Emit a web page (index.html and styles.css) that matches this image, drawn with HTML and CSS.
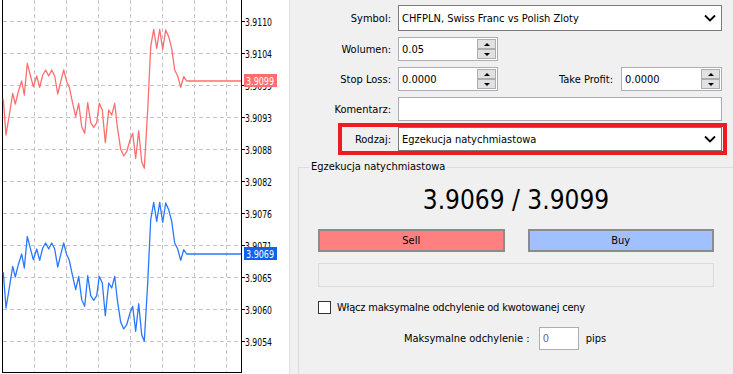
FILE: index.html
```html
<!DOCTYPE html>
<html lang="pl">
<head>
<meta charset="utf-8">
<title>Zlecenie</title>
<link rel="stylesheet" href="styles.css">
</head>
<body>
<div class="app">
  <div class="chart">
    <svg width="289" height="374" viewBox="0 0 289 374" xmlns="http://www.w3.org/2000/svg">
      <g class="grid" stroke="#c4c4c4" stroke-width="1" stroke-dasharray="4 3" fill="none">
        <line x1="34.5" y1="0" x2="34.5" y2="372"/>
        <line x1="66.5" y1="0" x2="66.5" y2="372"/>
        <line x1="98.5" y1="0" x2="98.5" y2="372"/>
        <line x1="130.5" y1="0" x2="130.5" y2="372"/>
        <line x1="162.5" y1="0" x2="162.5" y2="372"/>
        <line x1="194.5" y1="0" x2="194.5" y2="372"/>
        <line x1="226.5" y1="0" x2="226.5" y2="372"/>
        <line x1="3" y1="21.5" x2="241" y2="21.5"/>
        <line x1="3" y1="53.5" x2="241" y2="53.5"/>
        <line x1="3" y1="85.5" x2="241" y2="85.5"/>
        <line x1="3" y1="117.5" x2="241" y2="117.5"/>
        <line x1="3" y1="149.5" x2="241" y2="149.5"/>
        <line x1="3" y1="181.5" x2="241" y2="181.5"/>
        <line x1="3" y1="213.5" x2="241" y2="213.5"/>
        <line x1="3" y1="245.5" x2="241" y2="245.5"/>
        <line x1="3" y1="277.5" x2="241" y2="277.5"/>
        <line x1="3" y1="309.5" x2="241" y2="309.5"/>
        <line x1="3" y1="341.5" x2="241" y2="341.5"/>
      </g>
      <g stroke="#000" stroke-width="1">
        <line x1="2.5" y1="0" x2="2.5" y2="373"/>
        <line x1="2" y1="372.5" x2="242" y2="372.5"/>
        <line x1="241.5" y1="0" x2="241.5" y2="373"/>
        <line x1="241" y1="21.5" x2="245" y2="21.5"/>
        <line x1="241" y1="53.5" x2="245" y2="53.5"/>
        <line x1="241" y1="85.5" x2="245" y2="85.5"/>
        <line x1="241" y1="117.5" x2="245" y2="117.5"/>
        <line x1="241" y1="149.5" x2="245" y2="149.5"/>
        <line x1="241" y1="181.5" x2="245" y2="181.5"/>
        <line x1="241" y1="213.5" x2="245" y2="213.5"/>
        <line x1="241" y1="245.5" x2="245" y2="245.5"/>
        <line x1="241" y1="277.5" x2="245" y2="277.5"/>
        <line x1="241" y1="309.5" x2="245" y2="309.5"/>
        <line x1="241" y1="341.5" x2="245" y2="341.5"/>
      </g>
      <g class="axis-label">
        <text x="245" y="25.5" textLength="27" lengthAdjust="spacingAndGlyphs">3.9110</text>
        <text x="245" y="57.5" textLength="27" lengthAdjust="spacingAndGlyphs">3.9104</text>
        <text x="245" y="89.5" textLength="27" lengthAdjust="spacingAndGlyphs">3.9099</text>
        <text x="245" y="121.5" textLength="27" lengthAdjust="spacingAndGlyphs">3.9093</text>
        <text x="245" y="153.5" textLength="27" lengthAdjust="spacingAndGlyphs">3.9088</text>
        <text x="245" y="185.5" textLength="27" lengthAdjust="spacingAndGlyphs">3.9082</text>
        <text x="245" y="217.5" textLength="27" lengthAdjust="spacingAndGlyphs">3.9076</text>
        <text x="245" y="249.5" textLength="27" lengthAdjust="spacingAndGlyphs">3.9071</text>
        <text x="245" y="281.5" textLength="27" lengthAdjust="spacingAndGlyphs">3.9065</text>
        <text x="245" y="313.5" textLength="27" lengthAdjust="spacingAndGlyphs">3.9060</text>
        <text x="245" y="345.5" textLength="27" lengthAdjust="spacingAndGlyphs">3.9054</text>
      </g>
      <polyline class="ask-line" fill="none" stroke="#ff6e6e" stroke-width="1.3" stroke-linejoin="round"
        points="3.3,99.3 6,135 9.3,115 12.7,93.3 15.3,104 18.3,91.7 21.7,81 24.3,95 27.3,63.3 30.7,76.7 33.3,86.7 36.7,76 39.7,87.3 42.7,75 45.7,70 48.7,76 51.7,70 54.7,76 57.7,94 60.7,81.7 63.7,70 66.7,81.7 69.3,87.3 72.7,103.3 75.7,116.7 78.7,103.3 81.7,126.7 84.7,133.3 87.7,102.7 90.7,122.7 93.7,127.3 96.7,122.7 99.3,103.3 102.3,110 105.3,142.7 108.7,110 111.7,115 114.7,103.3 117.3,126.7 120.7,149.3 123.7,156 126.7,151.7 130,140 132.7,133.3 135.7,158.3 138.7,130.7 141.7,161.7 144.3,168.3 147.7,110 150.7,46.7 153.7,29.3 156.7,48.3 159.7,29.3 162.7,49.3 165.7,30 168.7,36.7 171.7,48.3 174.7,70 177.7,76 180.7,87.3 183.7,76.7 186.7,81 241,81"/>
      <polyline class="bid-line" transform="translate(0,173)" fill="none" stroke="#2a78ff" stroke-width="1.3" stroke-linejoin="round"
        points="3.3,99.3 6,135 9.3,115 12.7,93.3 15.3,104 18.3,91.7 21.7,81 24.3,95 27.3,63.3 30.7,76.7 33.3,86.7 36.7,76 39.7,87.3 42.7,75 45.7,70 48.7,76 51.7,70 54.7,76 57.7,94 60.7,81.7 63.7,70 66.7,81.7 69.3,87.3 72.7,103.3 75.7,116.7 78.7,103.3 81.7,126.7 84.7,133.3 87.7,102.7 90.7,122.7 93.7,127.3 96.7,122.7 99.3,103.3 102.3,110 105.3,142.7 108.7,110 111.7,115 114.7,103.3 117.3,126.7 120.7,149.3 123.7,156 126.7,151.7 130,140 132.7,133.3 135.7,158.3 138.7,130.7 141.7,161.7 144.3,168.3 147.7,110 150.7,46.7 153.7,29.3 156.7,48.3 159.7,29.3 162.7,49.3 165.7,30 168.7,36.7 171.7,48.3 174.7,70 177.7,76 180.7,87.3 183.7,76.7 186.7,81 241,81"/>
      <rect x="244" y="74" width="33" height="13" fill="#ff6e6e"/>
      <text class="badge-text" x="246" y="84.5" textLength="28" lengthAdjust="spacingAndGlyphs">3.9099</text>
      <rect x="244" y="247" width="33" height="13" fill="#0f62ea"/>
      <text class="badge-text" x="246" y="257.5" textLength="28" lengthAdjust="spacingAndGlyphs">3.9069</text>
    </svg>
  </div>

  <div class="panel">
    <div class="form">
      <div class="row row-tall">
        <span class="lbl">Symbol:</span>
        <div class="select">
          <span>CHFPLN, Swiss Franc vs Polish Zloty</span>
          <svg class="chev" width="12" height="8" viewBox="0 0 12 8"><path d="M1 1.5 L6 6.5 L11 1.5" fill="none" stroke="#000" stroke-width="1.8"/></svg>
        </div>
      </div>
      <div class="row">
        <span class="lbl">Wolumen:</span>
        <div class="num">
          <span>0.05</span>
          <div class="spin"><i class="up"></i><i class="down"></i></div>
        </div>
      </div>
      <div class="row">
        <span class="lbl">Stop Loss:</span>
        <div class="num">
          <span>0.0000</span>
          <div class="spin"><i class="up"></i><i class="down"></i></div>
        </div>
        <span class="lbl2">Take Profit:</span>
        <div class="num wide">
          <span>0.0000</span>
          <div class="spin"><i class="up"></i><i class="down"></i></div>
        </div>
      </div>
      <div class="row">
        <span class="lbl">Komentarz:</span>
        <div class="text"></div>
      </div>
      <div class="row highlight">
        <span class="lbl">Rodzaj:</span>
        <div class="select">
          <span>Egzekucja natychmiastowa</span>
          <svg class="chev" width="12" height="8" viewBox="0 0 12 8"><path d="M1 1.5 L6 6.5 L11 1.5" fill="none" stroke="#000" stroke-width="1.8"/></svg>
        </div>
      </div>
    </div>

    <fieldset class="group">
      <legend>Egzekucja natychmiastowa</legend>
      <div class="price">3.9069 / 3.9099</div>
      <div class="buttons">
        <div class="btn sell">Sell</div>
        <div class="btn buy">Buy</div>
      </div>
      <div class="status"></div>
      <div class="check-row">
        <span class="checkbox"></span>
        <span class="check-label">Włącz maksymalne odchylenie od kwotowanej ceny</span>
      </div>
      <div class="dev-row">
        <span>Maksymalne odchylenie :</span>
        <div class="small-input">0</div>
        <span>pips</span>
      </div>
    </fieldset>
  </div>
</div>
</body>
</html>
```

FILE: styles.css
```css
html, body {
  margin: 0;
  padding: 0;
}

body {
  font-family: "DejaVu Sans Condensed", "DejaVu Sans", "Liberation Sans", sans-serif;
  font-stretch: condensed;
  font-size: 11px;
  color: #000;
  background: #f0f0f0;
}

.app {
  display: flex;
  width: 733px;
  height: 374px;
  overflow: hidden;
}

.chart {
  flex: none;
  width: 289px;
  height: 374px;
  background: #fff;
}

.chart svg {
  display: block;
}

.axis-label text {
  font-family: "DejaVu Sans Condensed", "DejaVu Sans", sans-serif;
  font-stretch: condensed;
  font-size: 10px;
  fill: #000;
}

.badge-text {
  font-family: "DejaVu Sans Condensed", "DejaVu Sans", sans-serif;
  font-stretch: condensed;
  font-size: 10px;
  fill: #fff;
}

.panel {
  flex: 1;
  min-width: 0;
  border-left: 1px solid #e2e2e2;
  background: #f0f0f0;
  overflow: hidden;
}

.form {
  display: flex;
  flex-direction: column;
  gap: 6px;
  padding: 5px 11px 0 0;
}

.row {
  position: relative;
  display: flex;
  align-items: center;
  height: 24px;
}

.row-tall {
  height: 26px;
}

.lbl {
  flex: none;
  width: 101px;
  margin-right: 7px;
  text-align: right;
}

.lbl2 {
  flex: 1;
  margin-right: 8px;
  text-align: right;
}

.select {
  flex: 1;
  height: 100%;
  box-sizing: border-box;
  display: flex;
  align-items: center;
  justify-content: space-between;
  padding: 0 5px 0 3px;
  border: 1px solid #7a7a7a;
  background: #fff;
}

.chev {
  display: block;
}

.num {
  flex: none;
  width: 100px;
  height: 100%;
  box-sizing: border-box;
  display: flex;
  align-items: center;
  padding-left: 3px;
  border: 1px solid #abadb3;
  background: #fff;
}

.num.wide {
  width: 101px;
}

.spin {
  align-self: flex-start;
  margin: 1px 1px 0 auto;
  width: 19px;
  display: flex;
  flex-direction: column;
}

.spin i {
  display: flex;
  align-items: center;
  justify-content: center;
  height: 10px;
  box-sizing: border-box;
  border: 1px solid #adadad;
  background: #e1e1e1;
}

.spin i::before {
  content: "";
  width: 0;
  height: 0;
  border-left: 3px solid transparent;
  border-right: 3px solid transparent;
}

.spin .up::before {
  border-bottom: 3px solid #000;
}

.spin .down::before {
  border-top: 3px solid #000;
}

.text {
  flex: 1;
  height: 100%;
  box-sizing: border-box;
  border: 1px solid #abadb3;
  background: #fff;
}

.highlight::after {
  content: "";
  position: absolute;
  left: 48px;
  right: -5px;
  top: -4px;
  bottom: -4px;
  border: 4px solid #ed1c24;
  pointer-events: none;
}

.group {
  margin: 9px -1px 0 8px;
  padding: 0 19px;
  min-width: 0;
  height: 230px;
  border: 1px solid #dcdcdc;
}

.group legend {
  margin-left: -9px;
  padding: 0 2px;
  line-height: 14px;
}

.price {
  margin-top: 11px;
  font-size: 26px;
  line-height: 30px;
  text-align: center;
}

.buttons {
  display: grid;
  grid-template-columns: 1fr 1fr;
  gap: 23px;
  margin-top: 14px;
}

.btn {
  height: 23px;
  box-sizing: border-box;
  display: flex;
  align-items: center;
  justify-content: center;
  border: 2px solid #8c8c8c;
}

.sell {
  background: #ff8080;
}

.buy {
  background: #a0c0ff;
}

.status {
  margin-top: 11px;
  height: 24px;
  box-sizing: border-box;
  border: 1px solid #dadada;
}

.check-row {
  display: flex;
  align-items: center;
  gap: 6px;
  height: 13px;
  margin-top: 14px;
}

.check-label {
  letter-spacing: -0.2px;
}

.checkbox {
  flex: none;
  width: 13px;
  height: 13px;
  box-sizing: border-box;
  border: 1px solid #333;
  background: #fff;
}

.dev-row {
  display: flex;
  align-items: center;
  height: 23px;
  margin-top: 13px;
  padding-left: 86px;
}

.small-input {
  width: 40px;
  height: 23px;
  box-sizing: border-box;
  display: flex;
  align-items: center;
  padding-left: 3px;
  margin: 0 7px 0 9px;
  border: 1px solid #abadb3;
  background: #fff;
  color: #6d6d6d;
}
```
